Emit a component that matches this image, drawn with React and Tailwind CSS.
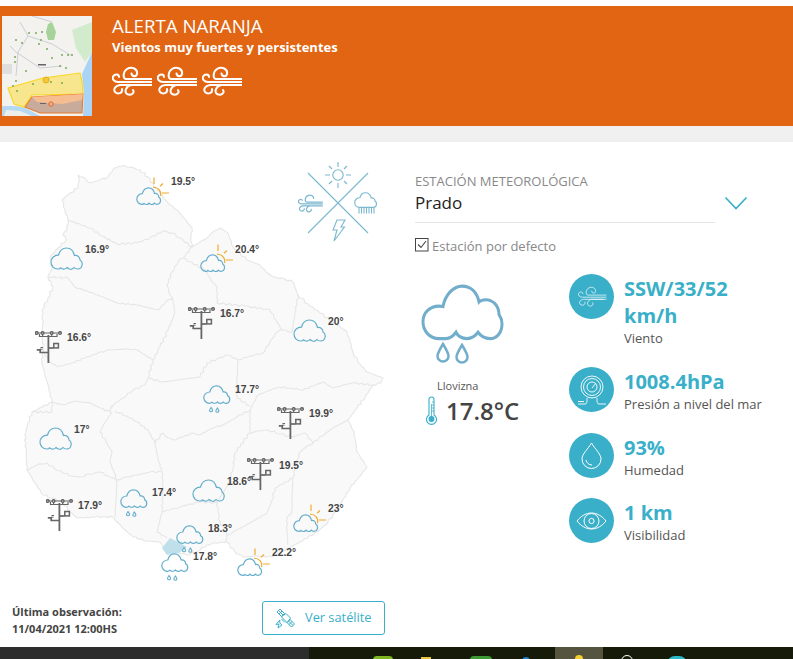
import React from "react";

const OPEN = { fontFamily: '"Open Sans", sans-serif' };

const OUTLINE =
  "M115 168L122 166L130 167L140 170L148 177L154 186L160 193L168 203L177 210L184 218L192 228L191 238L192 247L200 242L207 238L214 231L220 228L228 233L233 247L240 253L247 260L260 265L266 272L273 277L285 279L293 282L298 295L308 304L320 313L333 322L347 332L350 342L353 353L360 364L367 372L383 378L381 383L373 385L365 397L357 408L348 420L353 430L355 438L357 452L367 467L359 477L350 488L342 502L333 515L325 525L317 532L300 542L287 549L272 557L258 556L243 557L235 552L227 542L215 543L207 545L198 551L187 555L175 552L163 547L160 542L147 541L133 537L124 529L117 522L113 517L95 517L77 518L68 510L63 502L52 498L43 495L35 483L27 470L26 452L25 435L28 423L32 412L42 407L52 402L48 385L44 372L42 362L43 348L42 335L43 320L42 310L48 298L53 287L48 277L52 268L50 257L58 248L66 240L63 235L67 230L68 220L65 210L62 200L70 193L78 188L79 178L78 175L83 177L90 183L100 180L108 177L112 172L115 168";

const BORDERS = [
  "M68 220L90 228L102 236L117 244L137 243L150 238L163 231L172 233L180 238L192 247",
  "M48 277L68 278L75 287L98 295L117 303L137 305L158 310L168 300L173 300",
  "M192 247L183 258L180 259L172 272L167 285L170 295L173 300L175 313L168 330L160 347L153 360L148 378L145 385L133 390L123 398L110 407",
  "M183 258L205 270L211 280L217 287L217 303L245 306L270 310L276 320L282 330L292 332L298 295",
  "M282 330L277 332L270 342L263 353L250 356L238 360L228 355L217 359L207 363L200 377L177 380L163 382L148 378",
  "M42 350L50 362L58 367L72 363L85 358L98 353L110 350L125 349L137 350L153 360",
  "M238 360L237 380L237 398L250 406",
  "M52 402L52 412L32 412",
  "M52 402L63 405L75 401L90 403L100 408L110 412L113 406",
  "M112 412L105 422L100 432L106 442L112 452L110 462L114 472L117 480L116 498L115 517",
  "M115 411L127 416L137 422L148 430L155 443L158 458L162 472L163 490L162 512L157 532L167 538",
  "M27 470L37 465L47 463L55 469L62 472L72 476L80 477L90 474L100 472L108 476L117 480L127 477L137 475L150 472L162 472",
  "M155 443L163 433L168 438L173 440L183 437L193 433L200 435L212 428L223 425L237 417L250 410L254 402L258 395L268 391L278 387L290 388L303 390L313 386L323 382L333 388L343 385L353 383L373 385",
  "M348 420L333 428L322 436L313 443L306 447L300 452L296 465L293 478L292 495L292 512L287 518L287 530L288 545",
  "M250 410L250 433L258 431L268 430L280 434L292 437L305 433L313 443",
  "M250 433L241 444L235 453L233 468L228 485L217 502L218 512L220 522L227 535L225 542",
  "M293 478L275 488L272 500L267 513L250 523L233 532L227 535",
  "M218 503L200 502L190 504L180 507L170 510L163 512",
];

// the real borders are jagged, so break each straight segment up a little
const rough = (d) => {
  const pts = d
    .slice(1)
    .split("L")
    .map((p) => p.split(" ").map(Number));
  let out = `M${pts[0][0]} ${pts[0][1]}`;
  for (let i = 1; i < pts.length; i++) {
    const [x0, y0] = pts[i - 1];
    const [x1, y1] = pts[i];
    const steps = Math.max(1, Math.round(Math.hypot(x1 - x0, y1 - y0) / 3));
    for (let s = 1; s <= steps; s++) {
      const t = s / steps;
      const n = s === steps ? 0 : Math.sin((x0 + s) * 12.9898 + (y0 + s) * 78.233) * 0.8;
      const m = s === steps ? 0 : Math.cos((x1 + s) * 39.346 + (y1 - s) * 11.135) * 0.8;
      out += `L${(x0 + (x1 - x0) * t + n).toFixed(1)} ${(y0 + (y1 - y0) * t + m).toFixed(1)}`;
    }
  }
  return out;
};

const Wind = ({ className, strokeWidth = 2 }) => (
  <svg viewBox="0 0 40 30" fill="none" stroke="currentColor" strokeWidth={strokeWidth} strokeLinecap="round" className={className}>
    <path d="M40 13H14C10.5 13 11 5.5 15 3C20 0 26 3 25 8C24.4 11 20 11 19.5 7.5" />
    <path d="M40 16H6C2 16 0 13 1 10.5C3 7.5 7 8 7 11" />
    <path d="M40 19H8C3.5 19.5 1 23 3 26C6 29 11 27 10 23" />
    <path d="M36 19H19C14 20 12 26 15 28C19 30 23 27 21 24" />
  </svg>
);

const PlainCloud = () => (
  <svg width="33" height="23" viewBox="0 0 33 23" fill="none" stroke="#65aecb" strokeWidth="1.2">
    <path d="M8 22C3.5 22 1 18.5 1 15C1 11 4.5 8 8.5 8.2C9.5 4 12.5 1 16.5 1C20.5 1 23.5 4 24.5 8.5C27.5 8 30 10 30 13C32 14 32.5 16 32 18.5C31.5 21 29.5 22 27.5 22C26 22 24.8 21.5 24 20.5C23 22 21 22.5 19.5 22C18.5 21.7 17.7 21.2 17 20.5C16 22 13.5 22.5 11.5 21.5C11 21.3 10.8 21 10.5 20.8C10 21.8 9 22 8 22Z" />
  </svg>
);

const SunCloud = () => (
  <svg width="34" height="28" viewBox="0 -10 34 28" fill="none" strokeWidth="1.2">
    <g stroke="#f0ab2e">
      <path d="M17 0.3A7 7 0 0 1 24.5 9" />
      <path d="M18 -9.5V-3M24 -0.8L27 -3.5M26 6H33" />
    </g>
    <path
      d="M6 17.3C2.8 17.3 0.8 15 0.8 12C0.8 9 3.3 6.7 6.3 6.7C7.2 3.5 9.5 0.8 12.5 0.8C15.5 0.8 17.8 3 18.5 6.5C20.8 6 22.7 7.5 22.7 10C24.3 11 24.8 12.5 24.4 14.5C24 16.5 22.5 17.3 21 17.3C19.8 17.3 18.9 17 18.3 16.2C17.5 17.4 16 17.7 14.8 17.3C14 17.1 13.4 16.7 13 16.2C12.2 17.4 10.3 17.7 8.8 17C8.4 16.8 8.2 16.6 8 16.4C7.6 17.1 6.8 17.3 6 17.3Z"
      stroke="#65aecb"
    />
  </svg>
);

const DrizzleCloud = () => (
  <svg width="28" height="29" viewBox="0 0 28 29" fill="none" stroke="#65aecb" strokeWidth="1.2">
    <path d="M6.5 18.3C3 18.3 0.8 15.5 0.8 12.5C0.8 9.5 3.5 7 6.8 7C7.6 3.5 10 0.8 13.5 0.8C17 0.8 19.3 3.3 20.2 7C22.6 6.6 24.6 8.2 24.6 10.8C26.3 11.6 27 13.3 26.6 15.3C26.2 17.3 24.6 18.3 23 18.3C21.8 18.3 20.8 17.9 20.2 17C19.3 18.3 17.6 18.6 16.3 18.2C15.5 18 14.8 17.5 14.3 17C13.5 18.3 11.3 18.6 9.7 17.8C9.3 17.6 9 17.4 8.8 17.2C8.3 18 7.4 18.3 6.5 18.3Z" />
    <path d="M8 22.5C7 24 6.5 24.7 6.5 25.6A1.6 1.6 0 0 0 9.6 25.6C9.6 24.7 9 24 8 22.5Z" strokeWidth="1.1" />
    <path d="M14.3 23C13.3 24.5 12.8 25.2 12.8 26.1A1.6 1.6 0 0 0 15.9 26.1C15.9 25.2 15.3 24.5 14.3 23Z" strokeWidth="1.1" />
  </svg>
);

const Station = () => (
  <svg width="27" height="32" viewBox="0 0 27 32" fill="none" stroke="#666" strokeWidth="1.5">
    <circle cx="1.8" cy="2" r="1.3" />
    <circle cx="7.6" cy="2" r="1.3" />
    <circle cx="16.7" cy="2" r="1.3" />
    <circle cx="25" cy="2" r="1.3" />
    <path d="M3 2H6.5M9 2H15.5M18 2H24" strokeWidth="1.1" />
    <path d="M4.5 3V5.5H22V3M7.6 3V5.5M16.7 3V5.5" strokeWidth="1.2" />
    <path d="M13.4 4V32" strokeWidth="1.8" />
    <path d="M13.4 17H18.5" strokeWidth="1.7" />
    <rect x="18.8" y="12.5" width="4.6" height="4.4" strokeWidth="1.5" />
    <path d="M13.4 21.5H5.2V18.8H1.8" strokeWidth="1.7" />
    <path d="M5.5 16.5H8M5 18.2H7.5" strokeWidth="1" />
  </svg>
);

const ICONS = { cloud: PlainCloud, sun: SunCloud, drizzle: DrizzleCloud, station: Station };

const MARKERS = [
  { type: "sun", x: 136, y: 177 },
  { type: "cloud", x: 50, y: 247 },
  { type: "sun", x: 200, y: 244 },
  { type: "station", x: 188, y: 307 },
  { type: "station", x: 35, y: 331 },
  { type: "cloud", x: 293, y: 319 },
  { type: "drizzle", x: 203, y: 385 },
  { type: "station", x: 277, y: 407 },
  { type: "cloud", x: 39, y: 427 },
  { type: "station", x: 247, y: 458 },
  { type: "cloud", x: 192, y: 479 },
  { type: "drizzle", x: 120, y: 489 },
  { type: "station", x: 46, y: 499 },
  { type: "sun", x: 293, y: 504 },
  { type: "drizzle", x: 176, y: 525 },
  { type: "drizzle", x: 161, y: 553 },
  { type: "sun", x: 237, y: 548 },
];

const LABELS = [
  { t: "19.5°", x: 171, y: 182 },
  { t: "16.9°", x: 85, y: 250 },
  { t: "20.4°", x: 235, y: 250 },
  { t: "16.7°", x: 220, y: 314 },
  { t: "16.6°", x: 67, y: 338 },
  { t: "20°", x: 328, y: 322 },
  { t: "17.7°", x: 235, y: 390 },
  { t: "19.9°", x: 309, y: 414 },
  { t: "17°", x: 74, y: 430 },
  { t: "19.5°", x: 279, y: 466 },
  { t: "18.6°", x: 227, y: 482 },
  { t: "17.4°", x: 152, y: 493 },
  { t: "17.9°", x: 78, y: 506 },
  { t: "23°", x: 328, y: 509 },
  { t: "18.3°", x: 208, y: 529 },
  { t: "22.2°", x: 272, y: 553 },
  { t: "17.8°", x: 193, y: 557 },
];

const DOTS = [
  [20, 27], [37, 28], [27, 17], [40, 16], [39, 24], [14, 24], [13, 41], [13, 46], [60, 39], [66, 39],
  [70, 39], [14, 65], [31, 68], [49, 66], [60, 67], [11, 70], [15, 75], [34, 17], [45, 33], [50, 42],
  [64, 52], [58, 50], [24, 55],
];

const AlertMap = () => (
  <svg width="90" height="100" viewBox="0 0 90 100" className="shrink-0 blur-[0.4px]">
    <rect width="90" height="100" fill="#f3f2ee" />
    <path d="M90 36L85 47L80 58L82 78L81 100H90Z" fill="#a9d4f6" />
    <path d="M0 90L14 90L24 92L38 100H0Z" fill="#b6d9f3" />
    <path d="M2 100L4 94L18 95L30 100Z" fill="#ededea" />
    <path d="M70 14L90 6V36L83 46L74 32Z" fill="#d3ebcd" />
    <path d="M46 8L50 6L54 16L52 24L46 24L44 16Z" fill="#a5d39a" />
    <path d="M0 48H10V58H0Z" fill="#dfdfdf" />
    <path d="M18 6L26 20L16 36L14 60M26 20L50 28L70 40M30 0L50 6M14 36L38 52L60 50M8 30L14 36" fill="none" stroke="#c5cad2" strokeWidth="0.9" />
    <path d="M6 72L41 62L78 57L80 65L81 78L30 79L22 91L12 88Z" fill="#f8e68f" stroke="#f8d71c" strokeWidth="1.1" />
    <path d="M23 91L30 81L81 78L80 97L38 97Z" fill="#c8ab9b" stroke="#ea7a2d" strokeWidth="1.1" />
    <path d="M30 81L81 78L80 84L60 88L35 86Z" fill="#f6bd90" />
    <circle cx="44" cy="64" r="3" fill="#f3c936" stroke="#e3ae1e" />
    <circle cx="49" cy="88" r="2.2" fill="#e8b090" stroke="#e4692a" strokeWidth="1" />
    {DOTS.map(([x, y], i) => (
      <circle key={i} cx={x} cy={y} r="1" fill="#76a95a" />
    ))}
    <path d="M36 48h8v1.5h-8zM38 87h6v1h-6z" fill="#666" />
  </svg>
);

const Emblem = () => (
  <svg width="82" height="84" viewBox="0 0 82 84" fill="none" stroke="#7ab8cf" strokeWidth="1.1" className="absolute left-[297px] top-[19px]">
    <path d="M11 12L71 72M71 12L11 72" />
    <circle cx="41" cy="14" r="5.2" />
    <path d="M41 1V6M41 22V27M28 14H33M49 14H54M32 5L35 8M50 5L47 8M32 23L35 20M50 23L47 20" />
    <g transform="translate(1 33) scale(0.62)">
      <path d="M40 13H14C10.5 13 11 5.5 15 3C20 0 26 3 25 8M40 16H6C2 16 0 13 1 10.5C3 7.5 7 8 7 11M40 19H8C3.5 19.5 1 23 3 26C6 29 11 27 10 23M36 19H19C14 20 12 26 15 28C19 30 23 27 21 24" strokeWidth="2" />
    </g>
    <g transform="translate(57 31) scale(0.7)">
      <path d="M8 22C3.5 22 1 18.5 1 15C1 11 4.5 8 8.5 8.2C9.5 4 12.5 1 16.5 1C20.5 1 23.5 4 24.5 8.5C27.5 8 30 10 30 13C32 14 32.5 16 32 18.5C31.5 21 29.5 22 27.5 22Z" strokeWidth="1.6" />
    </g>
    <path d="M62 47V52.5M64.5 47V52.5M67 47V52.5M69.5 47V52.5M72 47V52.5M74.5 47V52.5M77 47V52.5" />
    <path d="M40 59H48L44 66H47.5L37 80L40 69H36Z" />
  </svg>
);

const Satellite = () => (
  <svg width="21" height="21" viewBox="0 0 21 21" fill="none" stroke="#3aafc9" strokeWidth="1">
    <path d="M5 1L9.5 5.5L6.5 8.5L2 4Z" />
    <path d="M3.5 2.5L8 7M7 3L4 6" />
    <path d="M15 11.5L19.5 16L16.5 19L12 14.5Z" />
    <path d="M13.5 13L18 17.5M17 13.5L14 16.5" />
    <path d="M8 7.5L11 5.5L15.5 10L13.5 13L12 14.5L6.5 9Z" />
    <path d="M6.5 11L10 14.5M5 12C4 14 5 16 7 17L3 20L4 16L1 16.5Z" />
  </svg>
);

const Stat = ({ icon, value, label, className = "" }) => (
  <div className={`flex items-start ${className}`}>
    <div className="flex h-[45px] w-[45px] shrink-0 items-center justify-center rounded-full bg-[#3aafc9] text-white">
      {icon}
    </div>
    <div className="ml-[10px] w-[160px] pt-[1px]">
      <div className="text-[20px] font-bold leading-[27px] text-[#3aafc9]">{value}</div>
      <div className="text-[13px] leading-[18px] text-[#555]">{label}</div>
    </div>
  </div>
);

export default function App() {
  return (
    <div className="flex h-[659px] w-[793px] flex-col overflow-hidden bg-white pt-[6px]" style={OPEN}>
      <header className="flex h-[120px] shrink-0 items-center bg-[#e26513] pl-[2px] text-white">
        <AlertMap />
        <div className="ml-[20px] self-start pt-[8px]">
          <h1 className="text-[18.7px] leading-[24px]">ALERTA NARANJA</h1>
          <p className="text-[13px] font-bold leading-[18px]">Vientos muy fuertes y persistentes</p>
          <div className="mt-[10px] flex gap-[5px]">
            <Wind className="h-[30px] w-[40px]" />
            <Wind className="h-[30px] w-[40px]" />
            <Wind className="h-[30px] w-[40px]" />
          </div>
        </div>
      </header>
      <div className="h-[16px] shrink-0 bg-[#f0f0f0]" />

      <main className="flex flex-1">
        <section className="w-[415px] shrink-0">
          <div className="relative h-[459px]">
            <svg width="400" height="459" viewBox="0 142 400 459" className="absolute left-0 top-0" fill="none" stroke="#e6e6e6" strokeWidth="1.1">
              <path d={rough(OUTLINE)} fill="#f9f9f9" />
              {BORDERS.map((d, i) => (
                <path key={i} d={rough(d)} />
              ))}
              <path d="M162 548L170 538L178 542L187 547L179 553L167 555Z" fill="#bfe0ea" stroke="none" />
            </svg>
            <Emblem />
            {MARKERS.map((m, i) => {
              const Icon = ICONS[m.type];
              return (
                <div key={i} className="absolute" style={{ left: m.x, top: m.y - 142 }}>
                  <Icon />
                </div>
              );
            })}
            {LABELS.map((l, i) => (
              <span
                key={i}
                className="absolute text-[10.3px] font-bold leading-[12px] text-[#444]"
                style={{ left: l.x, top: l.y - 148, fontFamily: '"Liberation Sans", sans-serif' }}
              >
                {l.t}
              </span>
            ))}
          </div>
          <div className="flex items-start justify-between pl-[12px] pr-[30px]">
            <div className="pt-[2px] text-[11px] font-bold leading-[17px] text-[#444]">
              <div>Última observación:</div>
              <div>11/04/2021 12:00HS</div>
            </div>
            <button className="flex h-[34px] w-[123px] items-center rounded-[3px] border border-[#3aafc9] pl-[12px] text-[12.8px] text-[#3aafc9]">
              <Satellite />
              <span className="ml-[9px]">Ver satélite</span>
            </button>
          </div>
        </section>

        <section className="flex-1 pt-[31px]">
          <div className="text-[13px] leading-[16px] text-[#888]">ESTACIÓN METEOROLÓGICA</div>
          <div className="flex items-start">
            <div className="h-[34px] w-[300px] border-b border-[#e5e5e5] pt-[1px] text-[17px] leading-[26px] text-[#222]">Prado</div>
            <svg width="24" height="14" viewBox="0 0 24 14" fill="none" stroke="#3aafc9" strokeWidth="1.7" className="ml-[9px] mt-[7px]">
              <path d="M1.5 1.5L12 12.5L22.5 1.5" />
            </svg>
          </div>
          <label className="mt-[15px] flex items-center text-[13px] leading-[16px] text-[#888]">
            <svg width="14" height="14" viewBox="0 0 14 14" fill="none" className="mb-[2px] shrink-0">
              <rect x="0.5" y="0.5" width="12.5" height="12.5" stroke="#444" />
              <path d="M3 6.5L6 9.5L11 3" stroke="#444" strokeWidth="1.1" />
            </svg>
            <span className="ml-[3px]">Estación por defecto</span>
          </label>

          <div className="mt-[20px] flex">
            <div className="w-[154px] shrink-0 pt-[10px]">
              <svg width="84" height="80" viewBox="0 0 84 80" fill="none" stroke="#72aecb" strokeWidth="3" className="ml-[6px]">
                <g transform="scale(1 1.05)">
                  <path d="M18 52C8 52 2 44 2 36C2 27 9 21 18 21C20 21 20 21 22 21.5C24 11 32 2 41 2C50 2 56 8 58 17C60 15 63 15 65 15C72 15 78 21 78 29C80 32 81 34 81 38C81 46 76 52 69 52C64 52 60 50 57 46C54 50 50 52 46 52C41 52 37 50 35 46C32 50 29 52 25 52C22 52 20 52 18 52Z" />
                </g>
                <path d="M22 60C19 65 16.5 69 16.5 72A5.5 5.5 0 0 0 27.5 72C27.5 69 25 65 22 60Z" strokeWidth="2.5" />
                <path d="M41 61C38 66 35.5 70 35.5 73A5.5 5.5 0 0 0 46.5 73C46.5 70 44 66 41 61Z" strokeWidth="2.5" />
              </svg>
              <div className="mt-[14px] pl-[22px] text-[11px] leading-[16px] text-[#555]">Llovizna</div>
              <div className="mt-[2px] flex items-center pl-[11px]">
                <svg width="11" height="30" viewBox="0 0 11 30" fill="none" stroke="#3aafc9" strokeWidth="1.1" className="shrink-0">
                  <path d="M3 19V3.5A2.5 2.5 0 0 1 8 3.5V19A5 5 0 1 1 3 19Z" />
                  <circle cx="5.5" cy="23" r="2.4" fill="#3aafc9" />
                  <path d="M5.5 8V21M6 6H8M6 9H8M6 12H8M6 15H8" strokeWidth="0.8" />
                </svg>
                <span className="ml-[9px] text-[24px] font-semibold leading-[30px] text-[#444]">17.8°C</span>
              </div>
            </div>

            <div className="flex-1">
              <Stat
                value={<>SSW/33/52<br />km/h</>}
                label="Viento"
                icon={<Wind className="h-[21px] w-[30px]" strokeWidth={1} />}
              />
              <Stat
                className="mt-[20px]"
                value="1008.4hPa"
                label="Presión a nivel del mar"
                icon={
                  <svg width="30" height="32" viewBox="0 0 30 32" fill="none" stroke="currentColor" strokeWidth="0.9">
                    <circle cx="15" cy="13" r="11" />
                    <circle cx="15" cy="13" r="8.5" />
                    <circle cx="15" cy="13" r="5" />
                    <path d="M15 14L19 9M1 30H8C10 30 10 28 10 24M29 30H22C20 30 20 28 20 24M1 27.5H7" />
                  </svg>
                }
              />
              <Stat
                className="mt-[20px]"
                value="93%"
                label="Humedad"
                icon={
                  <svg width="21" height="27" viewBox="0 0 21 27" fill="none" stroke="currentColor" strokeWidth="1">
                    <path d="M10.5 1C7 7 1 12 1 17A9.5 9.5 0 0 0 20 17C20 12 14 7 10.5 1Z" />
                    <path d="M5 18C5.5 21 8 23 11 23" />
                  </svg>
                }
              />
              <Stat
                className="mt-[19px]"
                value="1 km"
                label="Visibilidad"
                icon={
                  <svg width="31" height="18" viewBox="0 0 31 18" fill="none" stroke="currentColor" strokeWidth="1">
                    <path d="M1 9C5 4 10 1 15.5 1C21 1 26 4 30 9C26 14 21 17 15.5 17C10 17 5 14 1 9Z" />
                    <circle cx="15.5" cy="9" r="7.5" />
                    <circle cx="15.5" cy="9" r="2.6" />
                  </svg>
                }
              />
            </div>
          </div>
        </section>
      </main>

      <footer className="flex h-[12px] shrink-0 overflow-hidden bg-[#2d2d2d]">
        <div className="ml-[309px] flex flex-1 items-start bg-[#161a08]">
          <div className="ml-[64px] mt-[9px] h-[6px] w-[20px] rounded-t bg-[#7fb51e]" />
          <div className="ml-[28px] mt-[10px] h-[4px] w-[10px] bg-[#e9c43c]" />
          <div className="ml-[39px] mt-[9px] h-[6px] w-[22px] rounded-t bg-[#3d9a33]" />
          <div className="ml-[30px] mt-[10px] h-[4px] w-[8px] rounded-t-full bg-[#1f7fd6]" />
          <div className="ml-[25px] flex h-full w-[48px] justify-center bg-[#55553f] pt-[8px]">
            <div className="h-[6px] w-[8px] rounded-t-full bg-[#f2cf2e]" />
          </div>
          <div className="ml-[18px] mt-[8px] h-[8px] w-[12px] rounded-t-full border border-white" />
          <div className="ml-[34px] mt-[9px] h-[8px] w-[20px] rounded-t-full bg-[#2bb8c9]" />
        </div>
      </footer>
    </div>
  );
}
